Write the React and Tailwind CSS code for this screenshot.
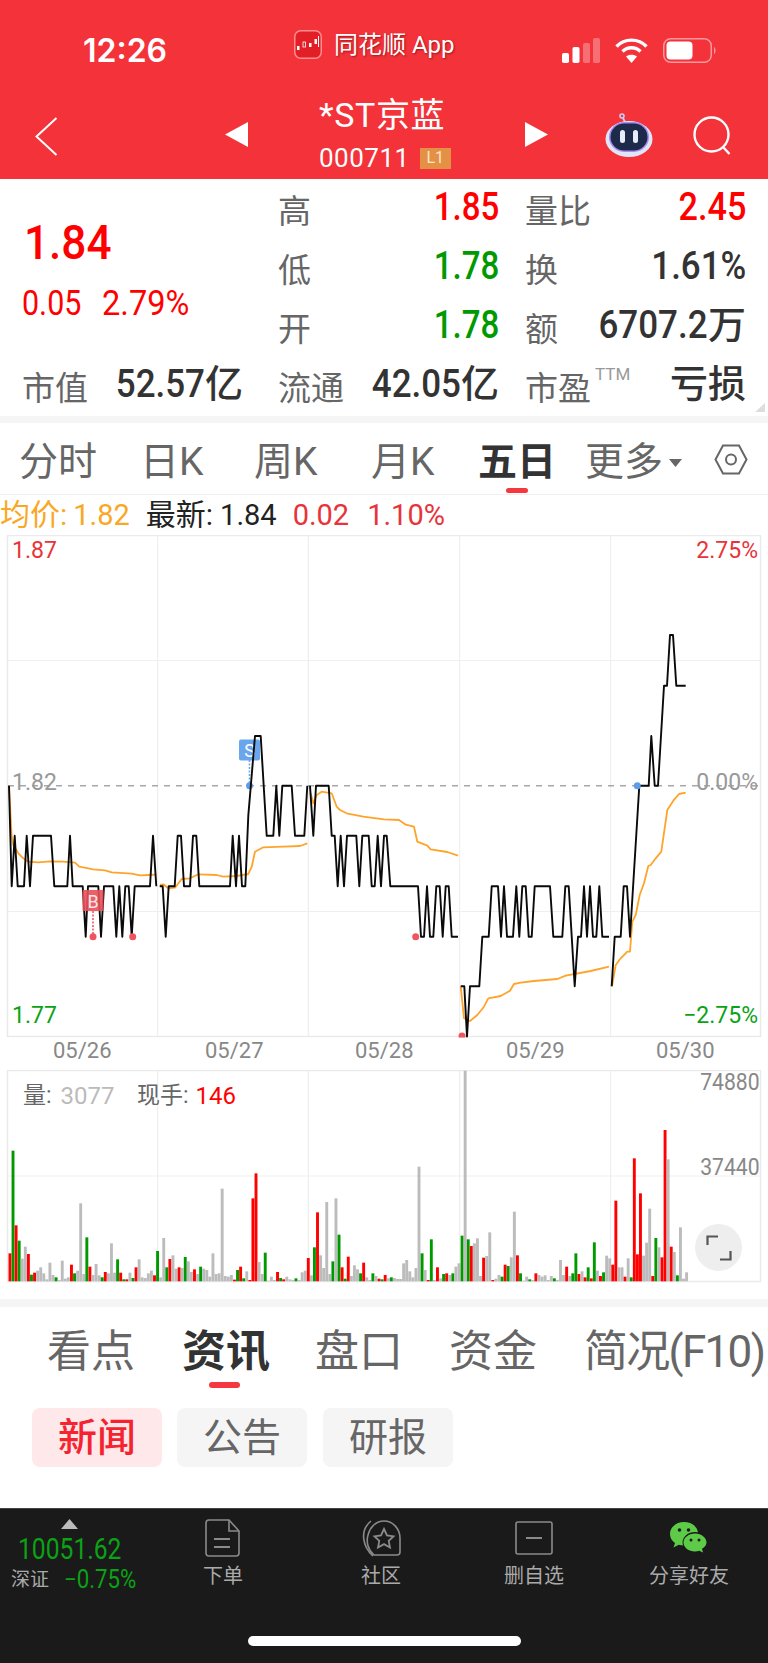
import React from "react";

const A = 767, B = 917, C = 1069, D = 1220, U = 618, E = 1369, F = 1520, P = 467, Q = 315;
const Z = 1152;
const blackSegs = [
  [[27,A],[35,C],[44,B],[53,C],[72,C],[80,B],[90,C],[99,B],[153,B],[163,C],[202,C],[210,B],[218,C],[248,C],[257,D],[264,C],[295,C],[303,D],[312,C],[340,C],[349,D],[358,C],[367,D],[376,C],[386,C],[395,D],[404,C],[450,C],[459,B],[469,C]],
  [[479,C],[488,C],[497,D],[506,C],[524,C],[533,B],[543,B],[552,C],[570,C],[579,B],[589,B],[598,C],[690,C],[698,B],[708,C],[717,B],[726,C],[736,C],[745,B-60],[765,U],[782,U],[800,B],[820,B],[829,A],[838,B],[847,A],[875,A],[885,B],[913,B],[922,A]],
  [[930,A],[940,B],[948,A],[986,A],[995,B],[1004,B],[1013,C],[1022,B],[1032,C],[1041,B],[1069,B],[1078,C],[1087,B],[1106,B],[1115,C],[1124,C],[1133,B],[1143,C],[1152,B],[Z+8,B],[Z+19,C],[Z+102,C],[Z+111,D],[Z+120,D],[Z+129,C],[Z+138,D],[Z+148,D],[Z+157,C],[Z+167,C],[Z+176,D],[Z+185,C],[Z+194,C],[Z+203,D],[Z+222,D]],
  [[Z+230,E],[Z+241,E],[Z+249,F],[Z+258,E],[Z+286,E],[Z+295,D],[Z+314,D],[Z+323,C],[Z+342,C],[Z+351,D],[Z+360,C],[Z+369,D],[Z+387,D],[Z+397,C],[Z+406,D],[Z+415,C],[Z+425,C],[Z+434,D],[Z+443,D],[Z+452,C],[Z+498,C],[Z+508,D],[Z+535,D],[Z+544,C],[Z+554,C],[Z+572,E],[Z+582,D],[Z+591,D],[Z+600,C],[Z+609,D],[Z+618,C],[Z+627,D],[Z+637,D],[Z+646,C],[Z+655,D],[Z+675,D]],
  [[Z+683,E],[Z+692,D],[Z+710,D],[Z+719,C],[Z+729,C],[Z+738,D],[Z+766,A],[Z+794,A],[Z+802,U],[Z+812,A],[Z+822,A],[Z+840,P],[Z+849,P],[Z+858,Q],[Z+867,Q],[Z+877,P],[Z+905,P]],
];
const orangeSegs = [
  [[27,A],[35,920],[40,945],[55,970],[70,985],[85,995],[115,997],[150,994],[190,995],[225,998],[238,1010],[280,1018],[315,1021],[335,1027],[395,1031],[420,1036],[445,1035],[469,1034]],
  [[480,1065],[490,1063],[505,1075],[525,1073],[545,1047],[570,1045],[595,1033],[650,1035],[670,1040],[710,1038],[745,1032],[755,1010],[765,965],[790,952],[850,950],[900,948],[922,940]],
  [[932,790],[940,820],[950,795],[965,785],[995,790],[1010,830],[1020,840],[1040,850],[1090,860],[1152,868],[Z+45,870],[Z+65,884],[Z+90,890],[Z+100,935],[Z+130,947],[Z+140,958],[Z+190,966],[Z+222,977]],
  [[Z+230,1370],[Z+240,1465],[Z+258,1473],[Z+280,1455],[Z+300,1430],[Z+313,1405],[Z+350,1398],[Z+378,1382],[Z+390,1362],[Z+410,1358],[Z+450,1353],[Z+520,1347],[Z+545,1337],[Z+620,1323],[Z+675,1310]],
  [[Z+684,1369],[Z+695,1305],[Z+710,1285],[Z+730,1265],[Z+738,1265],[Z+745,1175],[Z+755,1155],[Z+767,1095],[Z+780,1060],[Z+793,1008],[Z+800,1005],[Z+815,985],[Z+832,965],[Z+850,840],[Z+868,812],[Z+885,792],[Z+905,788]],
];
const toPts = (s) => s.map(([x, y]) => `${(x / 3).toFixed(1)},${(y / 3).toFixed(1)}`).join(" ");

const bars = "r580 g272 r496 g542 a596 a560 r582 g644 r638 a632 a622 a640 a658 a608 a645 g652 a660 a602 a656 a652 r614 g640 a632 a430 a642 g532 r620 a645 a612 a646 g652 r636 a640 a550 a638 g598 r638 g658 r658 a638 g654 r622 a598 a652 a654 a640 a632 r646 g573 a652 a534 g622 r597 a586 a626 r622 a624 g591 a604 a636 r628 a642 g620 a626 a630 a650 a580 a642 a640 a386 a648 a650 a645 r659 g630 r620 g655 a634 r660 r415 r340 a606 a642 g578 a662 a650 a660 r636 g654 r658 a650 a658 a660 g655 a660 a637 a632 r594 a646 g562 r457 a586 a624 a426 a642 g604 a415 g524 r622 g656 r590 a648 a616 a628 g640 r608 a652 a660 g640 a648 r656 g658 r645 a655 g652 a654 a657 a657 a610 a600 a634 a652 a624 a320 g580 a630 r660 g538 a660 r622 a655 g642 r640 a645 g640 a620 a610 g527 a32 g538 r558 a550 a535 a648 r593 a588 a517 r660 a656 a645 g650 r614 g618 a592 a455 r586 g640 a662 a650 g658 a660 r640 a645 a650 a646 a660 a648 g655 a660 a600 a645 r620 a648 g640 g580 r642 a634 r652 g622 r655 g547 a632 r648 g637 a587 a595 r614 r422 a622 a622 r650 a595 g652 r295 r583 r400 a587 a548 a446 r648 g534 a562 r592 r210 a298 r560 a576 g646 a502 a656 a637".split(" ");
const barColor = { r: "#ff0000", g: "#009900", a: "#bcbcbc" };

const vLines = [157.7, 308.3, 459.7, 610.7];

function PriceChart() {
  return (
    <div className="relative h-[535px] w-full">
      <svg className="absolute left-0 top-0" width="768" height="535" viewBox="0 535 768 535">
        <rect x="7.5" y="535.5" width="753" height="501" fill="#fff" stroke="#eaeaea" strokeWidth="1.5" />
        {vLines.map((x) => <line key={x} x1={x} x2={x} y1="536" y2="1036" stroke="#ececec" strokeWidth="1" />)}
        <line x1="8" x2="760" y1="660.5" y2="660.5" stroke="#efefef" strokeWidth="1" />
        <line x1="8" x2="760" y1="911.5" y2="911.5" stroke="#efefef" strokeWidth="1" />
        <line x1="8" x2="760" y1="785.7" y2="785.7" stroke="#a8a8a8" strokeWidth="1.5" strokeDasharray="6 6" />
        <rect x="239" y="739.5" width="21" height="21" rx="2" fill="#6aa6ee" />
        <text x="249.5" y="757" textAnchor="middle" fill="#fff" fontSize="18" fontFamily="Roboto">S</text>
        <line x1="249.5" x2="249.5" y1="760" y2="786" stroke="#6aa6ee" strokeWidth="1.6" strokeDasharray="2 1.5" />
        <circle cx="249.5" cy="785.7" r="3.5" fill="#5c9ceb" />
        <g transform="translate(0 530)">
          {orangeSegs.map((s, i) => <polyline key={i} points={toPts(s)} fill="none" stroke="#ffa42b" strokeWidth="1.8" strokeLinejoin="round" />)}
          {blackSegs.map((s, i) => <polyline key={i} points={toPts(s)} fill="none" stroke="#0a0a0a" strokeWidth="1.9" strokeLinejoin="round" />)}
        </g>
        <rect x="82.5" y="890" width="21" height="21" rx="1" fill="#e8505a" fillOpacity="0.9" />
        <text x="93" y="907.5" textAnchor="middle" fill="#fff" fillOpacity="0.85" fontSize="18" fontFamily="Roboto">B</text>
        <line x1="93" x2="93" y1="911" y2="936" stroke="#ee5a62" strokeWidth="1.6" strokeDasharray="2 1.5" />
        <circle cx="93" cy="936.7" r="3.5" fill="#ee5560" />
        <circle cx="132.7" cy="936.7" r="3.5" fill="#ee5560" />
        <circle cx="415.7" cy="936.7" r="3.5" fill="#ee5560" />
        <circle cx="462" cy="1036" r="3.5" fill="#ee5560" />
        <circle cx="637.3" cy="785.7" r="3.5" fill="#5c9ceb" />
        <rect x="0" y="1037.6" width="768" height="33" fill="#fff" />
      </svg>
      <span className="absolute left-[12px] top-[4px] text-[23px] leading-[24px] text-[#e8333a]">1.87</span>
      <span className="absolute left-[12px] top-[236px] text-[23px] leading-[24px] text-[#999]">1.82</span>
      <span className="absolute left-[12px] top-[469px] text-[23px] leading-[24px] text-[#0aa315]">1.77</span>
      <span className="absolute right-[10px] top-[4px] text-[23px] leading-[24px] text-[#e8333a]">2.75%</span>
      <span className="absolute right-[10px] top-[236px] text-[23px] leading-[24px] text-[#999]">0.00%</span>
      <span className="absolute right-[10px] top-[469px] text-[23px] leading-[24px] text-[#0aa315]">−2.75%</span>
      <div className="absolute left-0 right-0 top-[504px] text-[22px] leading-[24px] text-[#888]">
        <span className="absolute left-[53px]">05/26</span>
        <span className="absolute left-[205px]">05/27</span>
        <span className="absolute left-[355px]">05/28</span>
        <span className="absolute left-[506px]">05/29</span>
        <span className="absolute left-[656px]">05/30</span>
      </div>
    </div>
  );
}

function VolumeChart() {
  return (
    <div className="relative h-[213px] w-full">
      <svg className="absolute left-0 top-0" width="768" height="213" viewBox="0 1070 768 213">
        <rect x="7.5" y="1070.5" width="753" height="211" fill="#fff" stroke="#eaeaea" strokeWidth="1.5" />
        {vLines.map((x) => <line key={x} x1={x} x2={x} y1="1071" y2="1281" stroke="#ececec" strokeWidth="1" />)}
        <line x1="8" x2="760" y1="1176" y2="1176" stroke="#efefef" strokeWidth="1" />
        {bars.map((b, i) => {
          const top = 1060 + Number(b.slice(1)) / 3;
          return <rect key={i} x={(25.5 + 9.227 * i) / 3} y={top} width="2.9" height={1281.3 - top} fill={barColor[b[0]]} />;
        })}
      </svg>
      <div className="absolute left-[23px] top-[14px] flex gap-[9px] text-[23px] leading-[24px]">
        <span className="text-[#666]">量:</span>
        <span className="text-[24px] text-[#bbb]">3077</span>
      </div>
      <div className="absolute left-[137px] top-[14px] flex gap-[7px] text-[23px] leading-[24px]">
        <span className="text-[#666]">现手:</span>
        <span className="text-[24px] text-[#ff0000]">146</span>
      </div>
      <span className="absolute right-[8px] top-[0px] origin-right scale-x-[0.92] text-[23px] leading-[26px] text-[#888]">74880</span>
      <span className="absolute right-[8px] top-[85px] origin-right scale-x-[0.92] text-[23px] leading-[26px] text-[#888]">37440</span>
      <div className="absolute left-[695px] top-[154px] flex h-[47px] w-[47px] items-center justify-center rounded-full bg-[#eeeeee]">
        <svg width="26" height="26" viewBox="0 0 26 26" fill="none" stroke="#555" strokeWidth="2.2">
          <path d="M1.5 10V1.5H12" />
          <path d="M24.5 16V24.5H14" />
        </svg>
      </div>
    </div>
  );
}

function Stat({ label, value, unit, color, scale = "scale-x-[0.92]", extra }) {
  return (
    <div className="flex h-full items-center justify-between">
      <span className="relative pt-[9px] text-[33px] leading-[36px] text-[#666]">
        {label}
        {extra}
      </span>
      <span className="flex items-baseline text-[38px] font-medium leading-[40px]" style={{ color }}>
        {value && <span className={"inline-block origin-right " + scale}>{value}</span>}
        {unit}
      </span>
    </div>
  );
}

function Robot() {
  return (
    <svg width="48" height="44" viewBox="0 0 48 44">
      <circle cx="17" cy="3" r="2" fill="none" stroke="#c9cdf5" strokeWidth="1.6" />
      <path d="M18 5l2 4" stroke="#c9cdf5" strokeWidth="1.8" />
      <ellipse cx="24" cy="26" rx="23.5" ry="18" fill="#dfe6f7" />
      <rect x="4" y="9" width="40" height="30" rx="15" fill="#a78bf0" />
      <rect x="5.5" y="10.5" width="37" height="27" rx="13.5" fill="#1e2a4a" />
      <rect x="15" y="17" width="5" height="13" rx="2.5" fill="#e6edf8" />
      <rect x="28" y="17" width="5" height="13" rx="2.5" fill="#e6edf8" />
    </svg>
  );
}

function NavIcon({ label, children }) {
  return (
    <div className="flex flex-col items-center">
      <div className="flex h-[45px] items-start justify-center">{children}</div>
      <span className="whitespace-nowrap text-[20px] leading-[24px] text-[#aaa]">{label}</span>
    </div>
  );
}

export default function App() {
  return (
    <div className="relative h-[1663px] w-[768px] overflow-hidden bg-white font-[Roboto,'Noto_Sans_CJK_SC',sans-serif]">
      {/* header */}
      <header className="h-[179px] bg-[#f3323a] text-white">
        <div className="flex h-[100px] items-start pl-[83px] pr-[51px]">
          <span className="mt-[35px] w-[211px] font-[Inter,sans-serif] text-[32px] font-semibold leading-[32px]">12:26</span>
          <div className="mt-[30px] flex items-center">
            <svg width="28" height="29" viewBox="0 0 28 29">
              <rect x="0.75" y="0.75" width="26.5" height="27.5" rx="6" fill="#e21f26" stroke="#ff8d8f" strokeWidth="1.5" />
              <rect x="3" y="16" width="2.5" height="4" fill="#fff" />
              <rect x="9" y="12" width="2.5" height="5" fill="none" stroke="#fff" strokeWidth="0.8" />
              <rect x="15" y="13" width="2.5" height="4" fill="#fff" />
              <rect x="20.5" y="9" width="2.5" height="5" fill="#fff" />
              <path d="M24.5 6v11" stroke="#fff" />
            </svg>
            <span className="ml-[12px] text-[24px] leading-[28px] [text-shadow:1px_1px_2px_rgba(90,0,0,0.55)]">同花顺 App</span>
          </div>
          <div className="ml-auto mt-[38px] flex items-center">
            <svg width="38" height="25" viewBox="0 0 38 25">
              <rect x="0" y="15" width="7" height="10" rx="1.8" fill="#fff" />
              <rect x="10.5" y="9" width="7" height="16" rx="1.8" fill="#fff" />
              <rect x="21" y="5" width="7" height="20" rx="1.8" fill="#fff" fillOpacity="0.3" />
              <rect x="31" y="0" width="7" height="25" rx="1.8" fill="#fff" fillOpacity="0.3" />
            </svg>
            <svg className="ml-[15px]" width="33" height="25" viewBox="0 0 33 25" fill="none" stroke="#fff" strokeWidth="3.4">
              <path d="M1.5 8.5C9.5 0 23.5 0 31.5 8.5" />
              <path d="M7.5 13.5C12.5 8.5 20.5 8.5 25.5 13.5" />
              <path d="M16.5 25L11 18.5C14 16 19 16 22 18.5Z" fill="#fff" stroke="none" />
            </svg>
            <svg className="ml-[15px]" width="54" height="25" viewBox="0 0 54 25">
              <rect x="0.75" y="0.75" width="47.5" height="23.5" rx="7" fill="none" stroke="#fff" strokeOpacity="0.5" strokeWidth="1.5" />
              <rect x="3.5" y="3.5" width="26" height="18" rx="4" fill="#fff" />
              <path d="M51 9c2 1 2 6 0 7z" fill="#fff" fillOpacity="0.5" />
            </svg>
          </div>
        </div>
        <div className="flex h-[79px] items-start pl-[35px]">
          <svg className="mt-[17px]" width="23" height="39" viewBox="0 0 23 39" fill="none" stroke="#fff" strokeWidth="2">
            <path d="M21.5 1L1.5 19.5L21.5 38" />
          </svg>
          <svg className="ml-[167px] mt-[22px]" width="23" height="25" viewBox="0 0 23 25" fill="#fff">
            <path d="M23 0V25L0 12.5Z" />
          </svg>
          <div className="ml-[71px] -mt-[7px] flex w-[132px] flex-col items-start">
            <span className="h-[53px] whitespace-nowrap text-[34px] leading-[44px] tracking-[0.6px]">*ST京蓝</span>
            <div className="flex items-center">
              <span className="text-[26px] leading-[24px] tracking-[0.5px]">000711</span>
              <span className="ml-[10px] flex h-[21px] w-[31px] items-center justify-center bg-[#e59145] text-[16px] leading-none text-[#ffe6cc]">L1</span>
            </div>
          </div>
          <svg className="ml-[74px] mt-[22px]" width="23" height="25" viewBox="0 0 23 25" fill="#fff">
            <path d="M0 0V25L23 12.5Z" />
          </svg>
          <div className="ml-[57px] mt-[13px]"><Robot /></div>
          <svg className="ml-[40px] mt-[16px]" width="39" height="39" viewBox="0 0 39 39" fill="none" stroke="#fff" strokeWidth="2.4">
            <circle cx="18.5" cy="18.5" r="17" />
            <path d="M30 31l6.5 7" />
          </svg>
        </div>
      </header>

      {/* quote */}
      <section className="relative grid h-[237px] grid-cols-[278px_247px_243px] auto-rows-[56px] gap-y-[3px]">
        <div className="col-start-1 row-span-3 row-start-1 pl-[22px] text-[#ff0000]">
          <div className="ml-[2px] mt-[39px] origin-left scale-x-[0.9] text-[49px] font-medium leading-[50px]">1.84</div>
          <div className="mt-[17px] flex text-[35px] leading-[38px]">
            <span className="inline-block w-[80px] origin-left scale-x-[0.87]">0.05</span>
            <span className="inline-block origin-left scale-x-[0.93]">2.79%</span>
          </div>
        </div>
        <div className="col-start-2 row-start-1 pr-[26px]"><Stat label="高" value="1.85" color="#ff0000" scale="scale-x-[0.87]" /></div>
        <div className="col-start-3 row-start-1 pr-[22px]"><Stat label="量比" value="2.45" color="#ff0000" scale="scale-x-[0.9]" /></div>
        <div className="col-start-2 row-start-2 pr-[26px]"><Stat label="低" value="1.78" color="#009900" scale="scale-x-[0.87]" /></div>
        <div className="col-start-3 row-start-2 pr-[22px]"><Stat label="换" value="1.61%" color="#333" /></div>
        <div className="col-start-2 row-start-3 pr-[26px]"><Stat label="开" value="1.78" color="#009900" scale="scale-x-[0.87]" /></div>
        <div className="col-start-3 row-start-3 pr-[22px]"><Stat label="额" value="6707.2" unit="万" color="#333" /></div>
        <div className="col-start-1 row-start-4 pl-[22px] pr-[35px]"><Stat label="市值" value="52.57" unit="亿" color="#333" /></div>
        <div className="col-start-2 row-start-4 pr-[26px]"><Stat label="流通" value="42.05" unit="亿" color="#333" /></div>
        <div className="col-start-3 row-start-4 pr-[22px]">
          <Stat label="市盈" unit="亏损" color="#333" extra={<span className="absolute left-[70px] top-[4px] text-[17px] leading-[16px] text-[#999]">TTM</span>} />
        </div>
        <div className="absolute right-[3px] top-[224px] h-0 w-0 border-b-[9px] border-l-[10px] border-b-[#dddddd] border-l-transparent" />
      </section>
      <div className="h-[7px] bg-[#f5f5f5]" />

      {/* period tabs */}
      <nav className="relative flex h-[72px] items-center border-b border-[#eeeeee] pl-[19px] pt-[6px] text-[39px] leading-[44px] text-[#666]">
        <span className="w-[121px]">分时</span>
        <span className="w-[114px]">日K</span>
        <span className="w-[117px]">周K</span>
        <span className="w-[107px]">月K</span>
        <span className="w-[107px] font-bold text-[#333]">五日</span>
        <span className="whitespace-nowrap">更多</span>
        <svg className="ml-[6px] mt-[2px]" width="13" height="8" viewBox="0 0 13 8" fill="#666"><path d="M0 0h13L6.500 8z" /></svg>
        <svg className="ml-[32px] -mt-[4px]" width="34" height="31" viewBox="0 0 34 31" fill="none" stroke="#666" strokeWidth="2">
          <path d="M9 1.5H25L32.500 15.500L25 29.500H9L1.500 15.500Z" />
          <circle cx="17" cy="15.500" r="5" />
        </svg>
        <div className="absolute bottom-[1px] left-[506px] h-[5px] w-[22px] rounded-full bg-[#f5383f]" />
      </nav>

      {/* info */}
      <div className="flex h-[40px] items-center pl-[0px] text-[29px] leading-[32px]">
        <span className="text-[30px] text-[#f9a825]">均价:</span>
        <span className="ml-[6px] text-[#f9a825]">1.82</span>
        <span className="ml-[16px] text-[30px] text-[#222]">最新:</span>
        <span className="ml-[7px] text-[#222]">1.84</span>
        <span className="ml-[16px] text-[#e8333a]">0.02</span>
        <span className="ml-[18px] text-[#e8333a]">1.10%</span>
      </div>

      <PriceChart />
      <VolumeChart />

      <div className="mt-[16px] h-[8px] bg-[#f5f5f5]" />

      {/* news tabs */}
      <nav className="relative flex h-[88px] items-start overflow-hidden whitespace-nowrap pl-[47px] pt-[20px] text-[44px] leading-[50px] text-[#666]">
        <span className="w-[135px] shrink-0">看点</span>
        <span className="w-[133px] shrink-0 font-bold text-[#333]">资讯</span>
        <span className="w-[134px] shrink-0">盘口</span>
        <span className="w-[135px] shrink-0">资金</span>
        <span className="shrink-0 tracking-[-1.7px]">简况(F10)</span>
        <div className="absolute left-[209px] top-[75px] h-[6px] w-[31px] rounded-full bg-[#f5383f]" />
      </nav>
      <div className="flex h-[113px] items-start pl-[32px] pt-[13px] text-[39px] leading-[46px]">
        <span className="flex h-[59px] w-[130px] items-center justify-center rounded-[8px] bg-[#ffe8ea] font-medium text-[#f5222f]">新闻</span>
        <span className="ml-[15px] flex h-[59px] w-[130px] items-center justify-center rounded-[8px] bg-[#f5f5f5] text-[#666]">公告</span>
        <span className="ml-[16px] flex h-[59px] w-[130px] items-center justify-center rounded-[8px] bg-[#f5f5f5] text-[#666]">研报</span>
      </div>

      {/* bottom bar */}
      <footer className="relative h-[155px] border-t border-[#444] bg-[#1a1a1a]">
        <div className="flex items-start pt-[10px]">
          <div className="flex w-[150px] flex-col items-start pl-[11px]">
            <svg className="ml-[50px]" width="17" height="10" viewBox="0 0 17 10" fill="#bbb"><path d="M8.500 0L17 10H0z" /></svg>
            <span className="ml-[7px] mt-[5px] origin-left scale-x-[0.85] text-[29px] leading-[30px] text-[#0aa315]">10051.62</span>
            <div className="mt-[4px] flex items-center gap-[15px]">
              <span className="text-[19px] leading-[24px] text-[#aaa]">深证</span>
              <span className="origin-left scale-x-[0.89] text-[25px] leading-[24px] text-[#0aa315]">−0.75%</span>
            </div>
          </div>
          <div className="ml-[53px] w-[40px]">
            <NavIcon label="下单">
              <svg width="36" height="38" viewBox="0 0 36 38" fill="none" stroke="#8a8a8a" strokeWidth="1.6">
                <path d="M4 1H24L34 12V34Q34 37 31 37H4Q1 37 1 34V4Q1 1 4 1Z" />
                <path d="M24 1V12H34" />
                <path d="M9 20H25M9 28H25" strokeWidth="2" />
              </svg>
            </NavIcon>
          </div>
          <div className="ml-[118px] w-[40px]">
            <NavIcon label="社区">
              <svg width="42" height="38" viewBox="0 0 42 38" fill="none" stroke="#8a8a8a" strokeWidth="1.6">
                <path d="M13 37C3 28 -1 12 11 2" />
                <path d="M24 2C33 2 40 10 40 19V33Q40 36 37 36H14C8 31 6 23 8 16C10 8 16 2 24 2Z" />
                <path d="M24 10l3 6.500 6.500 0.800-4.800 4.500 1.300 6.700-6-3.400-6 3.400 1.300-6.700-4.800-4.500 6.500-0.800z" strokeWidth="1.800" />
              </svg>
            </NavIcon>
          </div>
          <div className="ml-[103px] flex w-[60px] justify-center">
            <NavIcon label="删自选">
              <svg className="mt-[2px]" width="38" height="34" viewBox="0 0 38 34" fill="none" stroke="#8a8a8a" strokeWidth="1.6">
                <rect x="1" y="1" width="36" height="32" rx="2" />
                <path d="M11 17H27" strokeWidth="2" />
              </svg>
            </NavIcon>
          </div>
          <div className="ml-[85px] flex w-[80px] justify-center">
            <NavIcon label="分享好友">
              <svg className="mt-[3px]" width="38" height="31" viewBox="0 0 38 31">
                <path d="M14 0C6 0 0 5.500 0 12c0 3.700 2 7 5 9l-1.500 4.500 5.200-2.700c1.700.5 3.400.8 5.300.8 8 0 14-5.500 14-12S22 0 14 0z" fill="#5ecb48" />
                <path d="M25 10c-7 0-12.500 4.800-12.500 10.500S18 31 25 31c1.500 0 3-.2 4.300-.7l4.400 .7-1.300-3.500c3.300-1.900 5.600-4.800 5.600-7.500C38 14.800 32 10 25 10z" fill="#1a1a1a" />
                <path d="M25 11.500c-6.300 0-11.500 4-11.500 9s5.200 9 11.500 9c1.500 0 2.900-.2 4.200-.7l3.800 1.700-1-3.700c2.700-1.600 4.500-3.900 4.500-6.300 0-5-5.200-9-11.500-9z" fill="#5ecb48" />
                <circle cx="9.500" cy="8" r="1.800" fill="#1a1a1a" /><circle cx="18.500" cy="8" r="1.800" fill="#1a1a1a" />
                <circle cx="21" cy="18" r="1.500" fill="#1a1a1a" /><circle cx="29" cy="18" r="1.500" fill="#1a1a1a" />
              </svg>
            </NavIcon>
          </div>
        </div>
        <div className="absolute bottom-[17px] left-[248px] h-[10px] w-[273px] rounded-full bg-white" />
      </footer>
    </div>
  );
}
